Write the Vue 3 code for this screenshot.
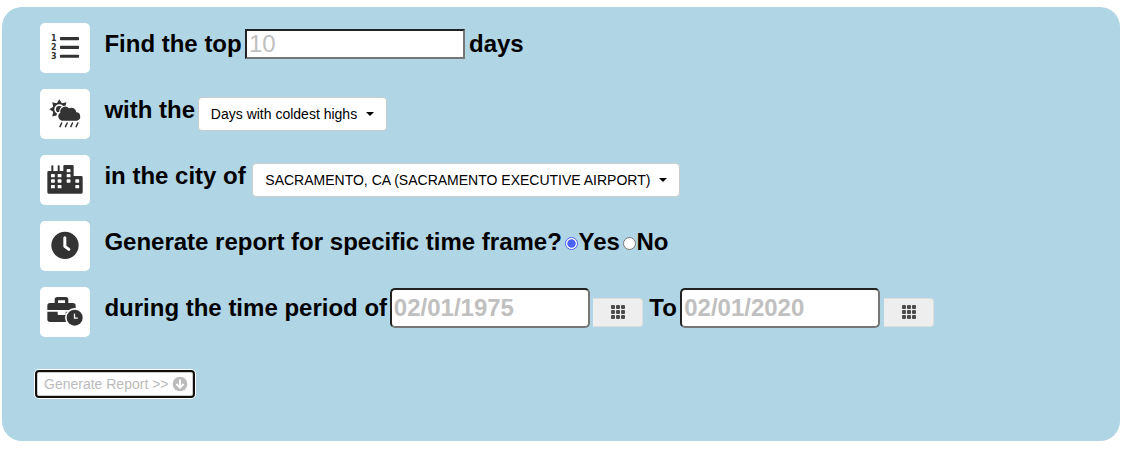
<script setup>
import { ref } from 'vue'

const timeFrame = ref('yes')
const rays = [0, 45, 90, 135, 180, 225, 270, 315]
const windows = [
  [63, 84], [63, 100], [63, 117],
  [83, 84], [83, 100], [83, 117],
  [110, 69], [110, 84], [110, 100],
  [136, 100], [136, 117],
]
const cells = [0, 1, 2, 3, 4, 5, 6, 7, 8]
</script>

<template>
  <main class="panel">
    <div class="row">
      <svg class="tile" viewBox="30 27 150 150">
        <g class="digits">
          <text x="63" y="82">1</text>
          <text x="63" y="109">2</text>
          <text x="63" y="136">3</text>
        </g>
        <rect x="90" y="69" width="57" height="9.500" rx="2" />
        <rect x="90" y="95.500" width="57" height="9.500" rx="2" />
        <rect x="90" y="122" width="57" height="9.500" rx="2" />
      </svg>
      <span class="label">Find the top</span>
      <input class="count" type="text" placeholder="10" />
      <span class="label days">days</span>
    </div>

    <div class="row">
      <svg class="tile" viewBox="30 27 150 150">
        <g transform="translate(88 88)">
          <path v-for="r in rays" :key="r" d="M-9-16 L0-30 L9-16Z" :transform="`rotate(${r})`" />
          <circle r="19.500" />
          <circle class="ring" r="12.500" />
        </g>
        <path class="halo" d="M98 122a13 13 0 0 1-6-25 15 15 0 0 1 26-11 15 15 0 0 1 20 11 12.500 12.500 0 0 1 2 25z" />
        <path d="M98 122a13 13 0 0 1-7-24 15 15 0 0 1 26-13 15 15 0 0 1 22 12 12.700 12.700 0 0 1 2 25z" />
        <path class="rain" d="M95 129l-5 11M111.500 129l-5 11M127.500 129l-5 11M143.500 129l-5 11" />
      </svg>
      <span class="label">with the</span>
      <button class="select weather" type="button">Days with coldest highs<i class="caret"></i></button>
    </div>

    <div class="row">
      <svg class="tile" viewBox="30 27 150 150">
        <path d="M52 79q0-4 4-4h8V59.500q0-2 3-2t3 2V75h13V59.500q0-2 3-2t3 2V75h11V61q0-4 4-4h23q4 0 4 4v29h23q4 0 4 4v45q0 4-4 4H56q-4 0-4-4z" />
        <rect v-for="(w, i) in windows" :key="i" class="window" :x="w[0]" :y="w[1]" width="11.500" height="10" rx="2" />
      </svg>
      <span class="label">in the city of</span>
      <button class="select city" type="button">SACRAMENTO, CA (SACRAMENTO EXECUTIVE AIRPORT)<i class="caret"></i></button>
    </div>

    <div class="row">
      <svg class="tile" viewBox="30 27 150 150">
        <circle cx="105" cy="100" r="41" />
        <path class="hands" d="M104.500 77v26l12 9" />
      </svg>
      <span class="label">Generate report for specific time frame?</span>
      <label class="choice yes"><input v-model="timeFrame" type="radio" value="yes" /><span class="label">Yes</span></label>
      <label class="choice"><input v-model="timeFrame" type="radio" value="no" /><span class="label">No</span></label>
    </div>

    <div class="row">
      <svg class="tile" viewBox="30 27 150 150">
        <path fill-rule="evenodd" d="M52 96V83q0-8 8-8h14V65q0-8 8-8h25q8 0 8 8v10h14q8 0 8 8v13zM84 67v8h21v-8z" />
        <path d="M52 101h31v7q0 3 3 3h18q3 0 3-3v-7h30v31H60q-8 0-8-8z" />
        <circle class="gap" cx="134" cy="119" r="29" />
        <circle cx="134" cy="119" r="24" />
        <path class="small-hands" d="M133.500 107v13.500h10" />
      </svg>
      <span class="label">during the time period of</span>
      <input class="date from" type="text" placeholder="02/01/1975" />
      <button class="picker" type="button">
        <span class="grid"><i v-for="c in cells" :key="c"></i></span>
      </button>
      <span class="label to">To</span>
      <input class="date until" type="text" placeholder="02/01/2020" />
      <button class="picker" type="button">
        <span class="grid"><i v-for="c in cells" :key="c"></i></span>
      </button>
    </div>

    <button class="generate" type="button">
      <span>Generate Report &gt;&gt;</span>
      <svg viewBox="0 0 16 16">
        <circle cx="8" cy="8" r="7.300" />
        <path d="M8 3.500v8M4.400 8L8 11.600 11.600 8" />
      </svg>
    </button>
  </main>
</template>

<style>
body {
  background: #fff;
}
</style>

<style scoped>
* {
  box-sizing: border-box;
}
.panel {
  width: 1118px;
  height: 434px;
  margin: 7px 0 0 2px;
  padding: 16px 0 0 38px;
  border-radius: 20px;
  background: #b0d5e5;
  font-family: "Liberation Sans", Arial, sans-serif;
  color: #000;
  overflow: hidden;
}
input,
button {
  font-family: inherit;
  margin: 0;
}
.row {
  display: flex;
  align-items: flex-start;
  height: 50px;
  margin-bottom: 16px;
  white-space: nowrap;
}
.tile {
  flex: none;
  width: 50px;
  height: 50px;
  margin-right: 14.4px;
  border-radius: 5px;
  background: #fff;
  fill: #333;
}
.digits {
  font: bold 24px "DejaVu Sans", sans-serif;
}
.ring {
  fill: #333;
  stroke: #fff;
  stroke-width: 5px;
}
.halo {
  stroke: #fff;
  stroke-width: 9px;
}
.rain {
  stroke: #333;
  stroke-width: 4.5px;
  stroke-linecap: round;
}
.window,
.gap {
  fill: #fff;
}
.hands {
  fill: none;
  stroke: #fff;
  stroke-width: 9px;
  stroke-linecap: round;
  stroke-linejoin: round;
}
.small-hands {
  fill: none;
  stroke: #fff;
  stroke-width: 4px;
}
.label {
  margin-top: 7px;
  font-size: 24px;
  font-weight: bold;
  line-height: 28px;
}
.count,
.date {
  border: 2px solid;
  border-color: #222 #767676 #767676 #222;
  background: #fff;
  padding: 1px 2px;
  font-size: 24px;
  outline: none;
}
.count {
  width: 220px;
  height: 30px;
  margin: 6px 4px 0 3.3px;
}
input::placeholder {
  color: #c0c0c0;
  opacity: 1;
}
.select {
  display: flex;
  align-items: center;
  height: 34px;
  margin-top: 8px;
  padding: 0 12px;
  border: 1px solid #ccc;
  border-radius: 4px;
  background: #fff;
  color: #000;
  font-size: 14px;
  line-height: 20px;
}
.weather {
  width: 189px;
  margin-left: 2.8px;
}
.city {
  width: 428px;
  margin-left: 6.6px;
}
.caret {
  margin-left: auto;
  border-top: 4px solid #000;
  border-left: 4px solid transparent;
  border-right: 4px solid transparent;
}
.choice {
  display: flex;
  align-items: flex-start;
}
.choice input {
  appearance: none;
  width: 13px;
  height: 13px;
  margin: 16px 0 0 3.6px;
  border: 1px solid #767676;
  border-radius: 50%;
  background: #fff;
}
.choice input:checked {
  border-color: #4b62fa;
  background: radial-gradient(circle, #4b62fa 3.8px, #fff 4.6px);
}
.date {
  width: 200px;
  height: 40px;
  margin-top: 1px;
  border-radius: 5px;
  font-weight: bold;
}
.from {
  margin-left: 2.8px;
}
.until {
  margin-left: 3.3px;
}
.picker {
  display: flex;
  align-items: center;
  justify-content: center;
  width: 50px;
  height: 29px;
  margin: 10.5px 0 0 3.5px;
  padding: 0;
  border: 1px solid #ddd;
  border-left-color: #eee;
  border-radius: 0 4px 4px 0;
  background: #eee;
}
.grid {
  display: grid;
  grid-template-columns: repeat(3, 4px);
  grid-auto-rows: 4px;
  gap: 1px;
}
.grid i {
  border-radius: 1px;
  background: #4c4c4c;
}
.to {
  margin-left: 6px;
}
.generate {
  display: flex;
  align-items: center;
  width: 160px;
  height: 28px;
  margin: 33px 0 0 -5px;
  padding: 0 0 0 7px;
  border: 2px solid #101010;
  border-radius: 4px;
  background: #fff;
  box-shadow: 0 0 0 1px #fff, inset 0 0 0 1px #ccc;
  color: #bbb;
  font-size: 14px;
  white-space: nowrap;
}
.generate svg {
  width: 16px;
  height: 16px;
  margin-left: 3px;
  fill: #bbb;
}
.generate path {
  fill: none;
  stroke: #fff;
  stroke-width: 1.9px;
}
</style>
